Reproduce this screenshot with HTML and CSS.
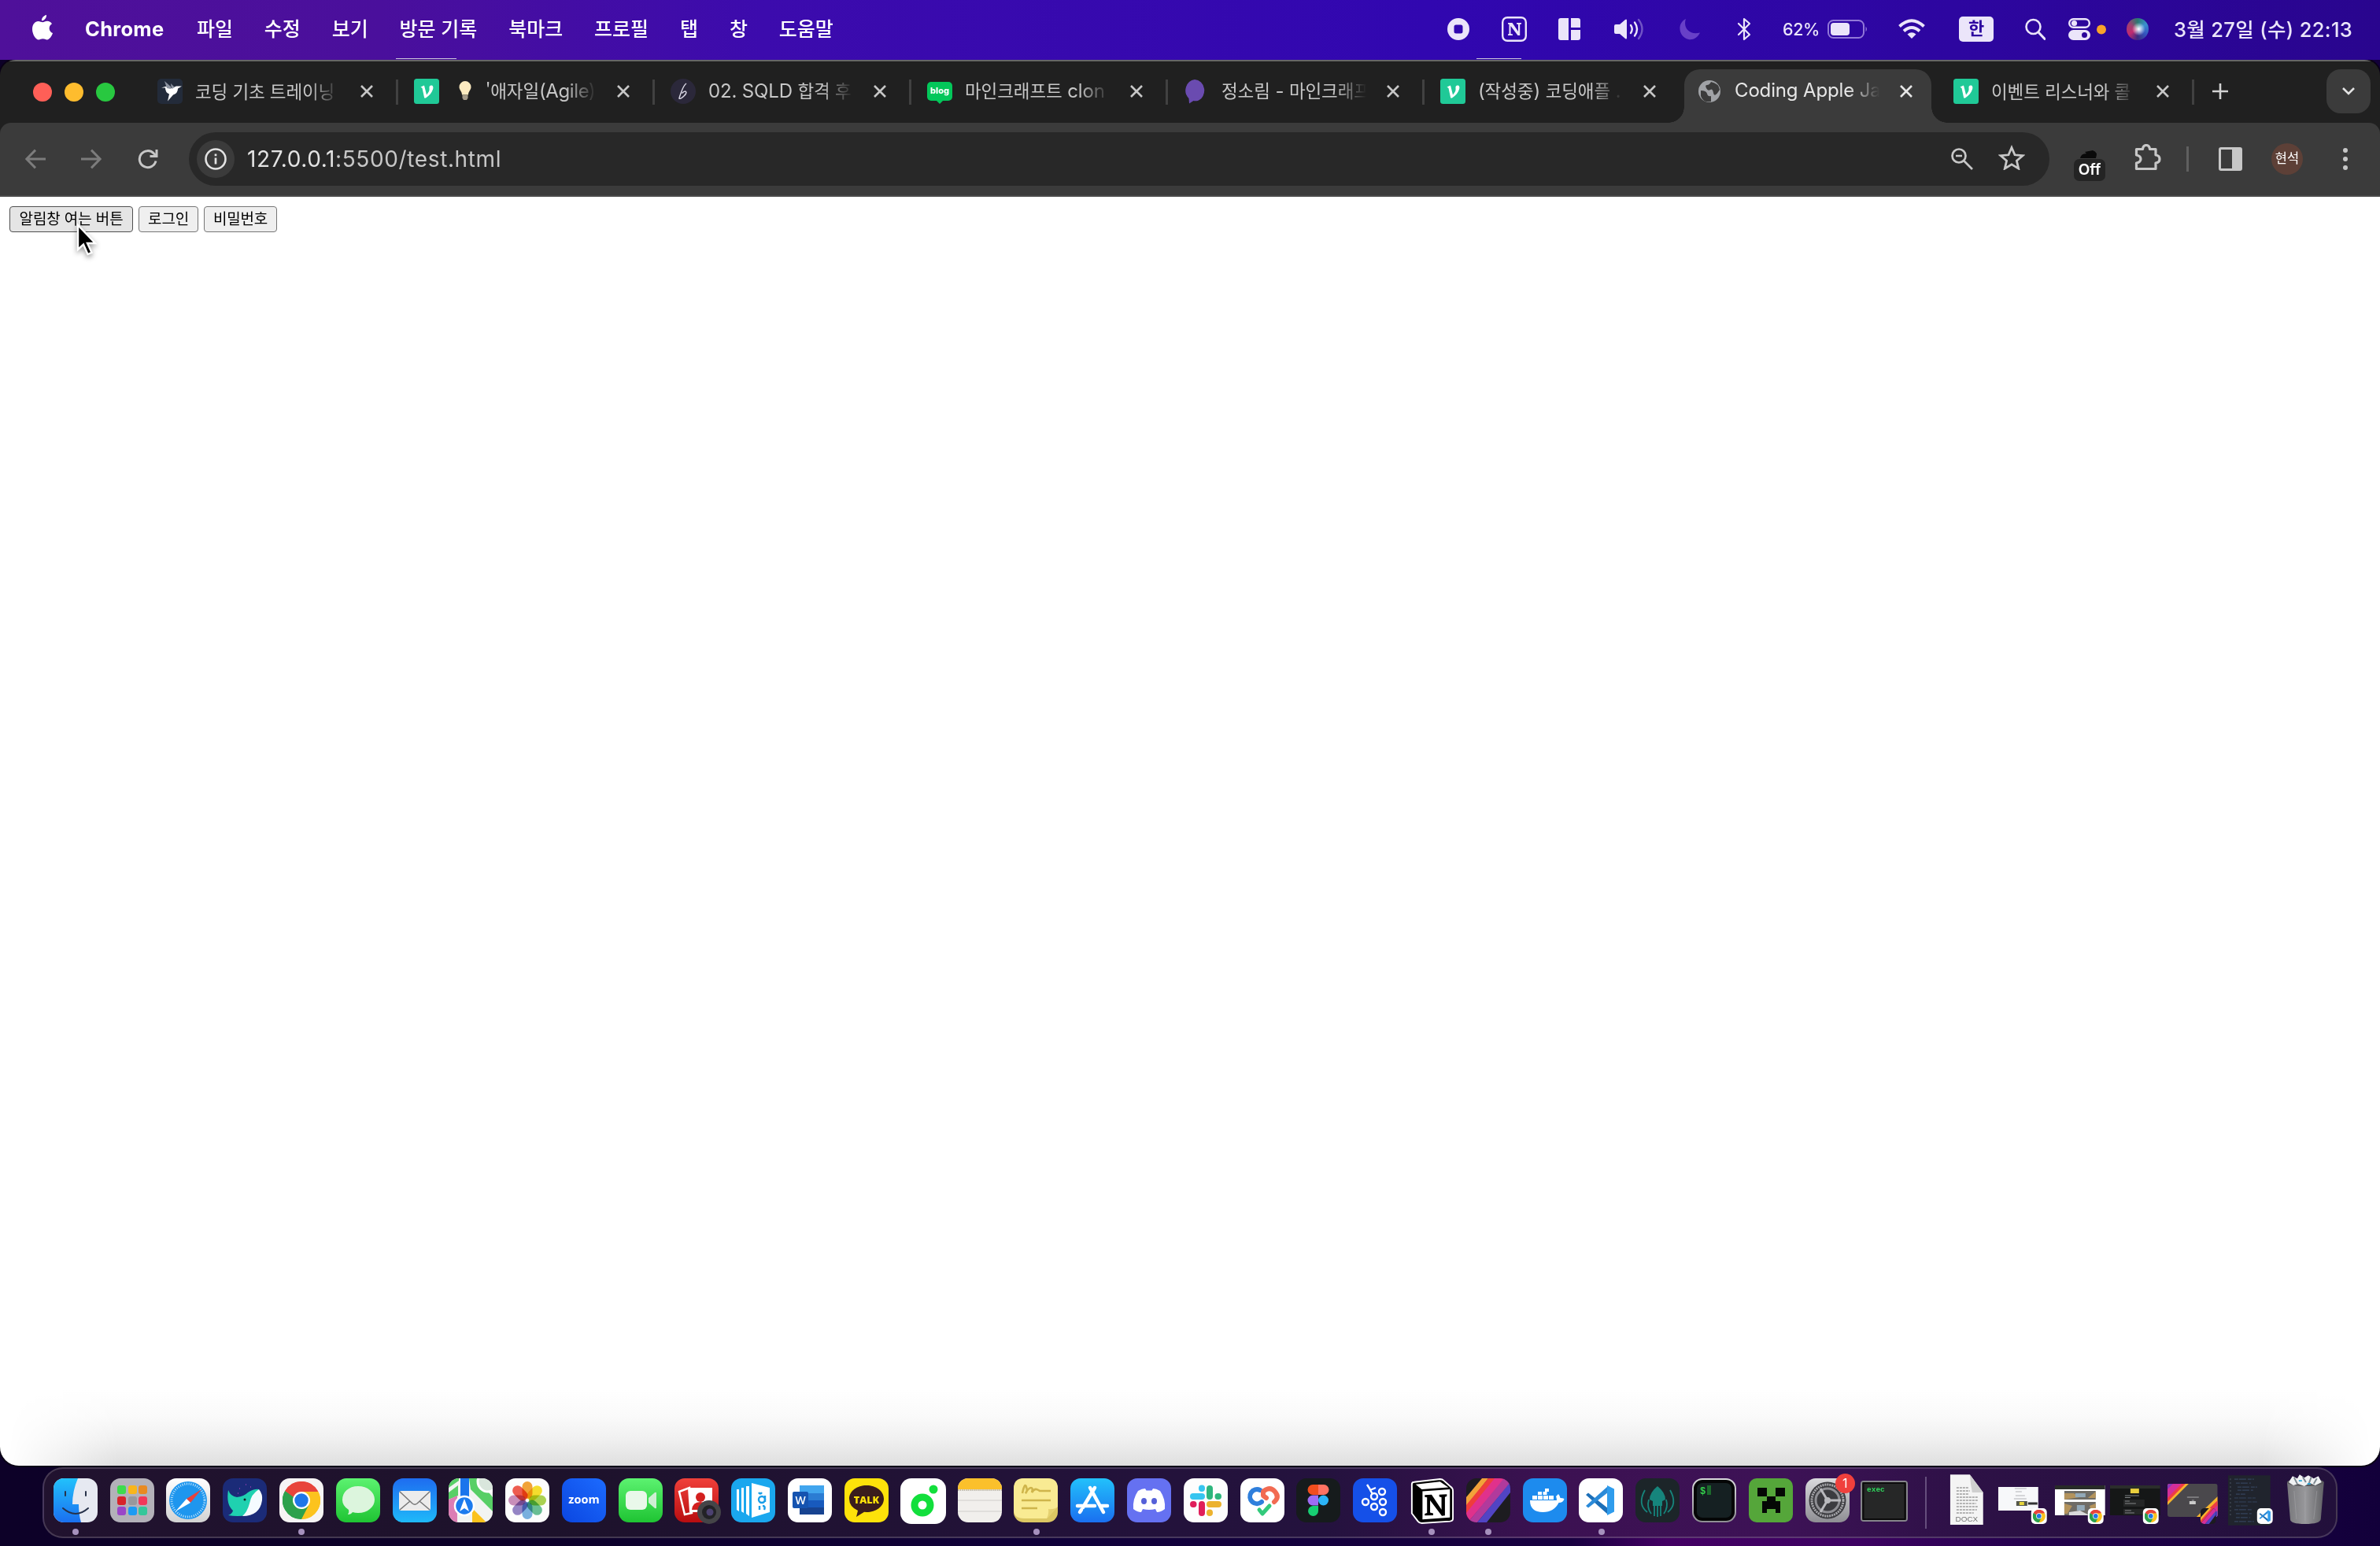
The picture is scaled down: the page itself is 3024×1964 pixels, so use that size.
FILE: index.html
```html
<!DOCTYPE html>
<html lang="ko">
<head>
    <meta charset="UTF-8">
    <meta name="viewport" content="width=device-width, initial-scale=1.0">
    <title>Coding Apple JavaScript</title>
    <link rel="stylesheet" href="styles.css">
</head>
<body>

<!-- 공용 그라디언트와 심볼 -->
<svg class="defs" width="0" height="0">
    <defs>
        <linearGradient id="gBlue" x1="0" y1="0" x2="0" y2="1"><stop offset="0" stop-color="#22c1fb"/><stop offset="1" stop-color="#1a6ff0"/></linearGradient>
        <linearGradient id="gGreen" x1="0" y1="0" x2="0" y2="1"><stop offset="0" stop-color="#5cf270"/><stop offset="1" stop-color="#1fc433"/></linearGradient>
        <linearGradient id="gMail" x1="0" y1="0" x2="0" y2="1"><stop offset="0" stop-color="#1e6cf0"/><stop offset="1" stop-color="#1fb9f9"/></linearGradient>
        <linearGradient id="gZoom" x1="0" y1="1" x2="1" y2="0"><stop offset="0" stop-color="#0b46e0"/><stop offset="1" stop-color="#1c6bff"/></linearGradient>
        <linearGradient id="gGray" x1="0" y1="0" x2="0" y2="1"><stop offset="0" stop-color="#fff"/><stop offset="1" stop-color="#d2d2d2"/></linearGradient>
        <linearGradient id="gRed" x1="0" y1="0" x2="0" y2="1"><stop offset="0" stop-color="#f0403a"/><stop offset="1" stop-color="#b80d10"/></linearGradient>
        <linearGradient id="gMetal" x1="0" y1="0" x2="0" y2="1"><stop offset="0" stop-color="#d9d9dc"/><stop offset="1" stop-color="#8e8e93"/></linearGradient>
        <linearGradient id="gTrash" x1="0" y1="0" x2="1" y2="0"><stop offset="0" stop-color="#77777b"/><stop offset=".5" stop-color="#98989b"/><stop offset="1" stop-color="#626266"/></linearGradient>
        <clipPath id="app"><rect width="56" height="56" rx="13"/></clipPath>
        <clipPath id="thumb"><rect x="4" y="21" width="64" height="42" rx="3"/></clipPath>
        <clipPath id="mark"><rect x="46" y="52" width="20" height="20" rx="5"/></clipPath>
        <symbol id="chrome" viewBox="0 0 48 48">
            <path d="M24 24 3.2 12A24 24 0 0 1 44.8 12z" fill="#e8453c"/>
            <path d="M24 24 44.8 12A24 24 0 0 1 24 48z" fill="#fcc31e"/>
            <path d="M24 24 24 48A24 24 0 0 1 3.2 12z" fill="#2da14c"/>
            <path d="M24 13h21.3a24 24 0 0 1-21.3 35l9.5-18.5z" fill="#fcc31e"/>
            <path d="M3.2 12 14.5 29.5A11 11 0 0 0 33.5 29.5L24 48A24 24 0 0 1 3.2 12z" fill="#2da14c"/>
            <path d="M3.2 12A24 24 0 0 1 45.3 13H24a11 11 0 0 0-10 7z" fill="#e8453c"/>
            <circle cx="24" cy="24" r="11" fill="#fff"/><circle cx="24" cy="24" r="8.7" fill="#1f76e8"/>
        </symbol>
        <symbol id="vscode" viewBox="0 0 40 40">
            <path d="M2 13 5 10.500 30 30v8z" fill="#1c6fb8"/><path d="M2 27 5 29.500 30 10V2z" fill="#2a8ad8"/><path d="M29 1l9 4.500v29L29 39z" fill="#2f9cec"/>
        </symbol>
        <symbol id="velog" viewBox="0 0 32 32">
            <rect width="32" height="32" rx="3.500" fill="#20c997"/><path d="M8.500 10.500 13 8.500l3 12c3-3.500 4-6 3.500-8.500-.3-2 .5-3.500 2.500-3.500s3 2 2 5c-1.200 4-4.500 8-9 11h-1.800L10.500 12z" fill="#fff"/>
        </symbol>
        <symbol id="close" viewBox="0 0 20 20"><path d="M3 3l14 14M17 3 3 17" stroke="currentColor" stroke-width="2.600"/></symbol>
    </defs>
</svg>

<!-- 메뉴 막대 -->
<header class="menubar">
    <svg class="apple" viewBox="0 0 26 32"><path d="M18 0c.3 3.800-2.700 7.300-6 7.300C11.600 4 14.800.5 18 0zM13.200 9.300c1.600 0 3.200-1.500 5.800-1.500 2.500 0 4.800 1.300 6 3.400-5 3-4.200 9.800 1 11.900-1 3.200-4 8.400-7.200 8.400-2 0-2.900-1.200-5.300-1.200-2.500 0-3.500 1.200-5.400 1.200C4.500 31.500 0 24.500 0 18c0-6.300 3.800-10 7.500-10 2.500 0 4.300 1.300 5.700 1.300z" fill="#fff"/></svg>
    <nav class="menu">
        <b class="app-name">Chrome</b>
        <span>파일</span>
        <span>수정</span>
        <span>보기</span>
        <span>방문 기록</span>
        <span>북마크</span>
        <span>프로필</span>
        <span>탭</span>
        <span>창</span>
        <span>도움말</span>
    </nav>
    <div class="status">
        <svg class="s-rec" viewBox="0 0 28 28"><path fill-rule="evenodd" d="M14 0a14 14 0 1 0 0 28 14 14 0 0 0 0-28zM11 8.500h6a2.500 2.500 0 0 1 2.500 2.500v6a2.500 2.500 0 0 1-2.500 2.500h-6A2.500 2.500 0 0 1 8.500 17v-6A2.500 2.500 0 0 1 11 8.500z"/></svg>
        <svg class="s-notion" viewBox="0 0 32 32"><rect x="1.200" y="1.200" width="29.600" height="29.600" rx="6" fill="none" stroke="#ebe5fa" stroke-width="2.400"/><path d="M8 8h5.500l7.500 11V10l-2-.5V8h6v1.500l-1.800.5v14h-2.700L11.500 12v10l2.500.5V24H8v-1.500l1.500-.5V10L8 9.500z"/></svg>
        <svg class="s-split" viewBox="0 0 28 28"><path d="M3 0h10v28H3a3 3 0 0 1-3-3V3a3 3 0 0 1 3-3zM16 0h9a3 3 0 0 1 3 3v9H16zM16 15h12v10a3 3 0 0 1-3 3h-9z"/></svg>
        <svg class="s-vol" viewBox="0 0 38 28"><path d="M0 10a2 2 0 0 1 2-2h5l7-6q2-1.500 2 1v22q0 2.500-2 1l-7-6H2a2 2 0 0 1-2-2z"/><g fill="none" stroke="#ebe5fa" stroke-width="2.400" stroke-linecap="round"><path d="M21 9q3.500 5 0 10"/><path d="M26 5.500q6 8.500 0 17"/><path d="M31 2q9 12 0 24" opacity=".35"/></g></svg>
        <svg class="s-moon" viewBox="0 0 28 28"><path d="M9 1C5 13 14 22 27 18.500 24 25 18 28 12.500 27 0 24-3 7 9 1z" fill="#6840c8"/></svg>
        <svg class="s-bt" viewBox="0 0 18 30"><path d="M2 8l14 14-7 6V2l7 6L2 22" fill="none" stroke="#ebe5fa" stroke-width="2.200" stroke-linejoin="round" stroke-linecap="round"/></svg>
        <span class="percent">62%</span>
        <svg class="s-bat" viewBox="0 0 52 24"><rect x="1" y="1" width="45" height="22" rx="6.500" fill="none" stroke="#9278d8" stroke-width="2"/><rect x="4" y="4" width="24" height="16" rx="4"/><path d="M48.500 8.500q3 3.500 0 7z" fill="#9278d8"/></svg>
        <svg class="s-wifi" viewBox="0 0 34 26"><g fill="none" stroke="#ebe5fa" stroke-width="4"><path d="M1.500 9.500q15.500-14.500 31 0"/><path d="M7 15.500q10-9 20 0"/></g><path d="M11.500 19.500q5.500-4.500 11 0L17 25z"/></svg>
        <span class="ime">한</span>
        <svg class="s-find" viewBox="0 0 26 28"><circle cx="10.500" cy="11" r="9" fill="none" stroke="#ebe5fa" stroke-width="2.600"/><path d="M17 18l8 8.500" stroke="#ebe5fa" stroke-width="3" stroke-linecap="round"/></svg>
        <svg class="s-ctl" viewBox="0 0 48 28"><rect x="1.200" y="1.200" width="25.600" height="10.600" rx="5.300" fill="none" stroke="#ebe5fa" stroke-width="2.400"/><circle cx="7.500" cy="6.500" r="3.600"/><path fill-rule="evenodd" d="M6.500 15h15a6.500 6.500 0 0 1 0 13h-15a6.500 6.500 0 0 1 0-13zM20.500 18a3.500 3.500 0 1 0 0 7 3.500 3.500 0 0 0 0-7z"/><circle cx="42" cy="14.500" r="6" fill="#f9a32a"/></svg>
        <i class="siri"></i>
        <span class="clock">3월 27일 (수) 22:13</span>
    </div>
    <i class="peek peek-left"></i>
    <i class="peek peek-right"></i>
</header>

<!-- 브라우저 창 -->
<main class="window">
    <div class="tabstrip">
        <div class="lights"><i class="red"></i><i class="yellow"></i><i class="green"></i></div>
        <div class="tab">
            <svg class="favicon" viewBox="0 0 32 32"><rect width="32" height="32" rx="5" fill="#232b3a"/><path d="M5 11.500 10 10q2-1 4 1l4 1 6-2.500h7l-5 3q0 6-6 8l-7 8 2-9q-5-2-5-8z" fill="#fff"/><path d="M9 3l8 7v3l-5-1zM17 6l5 5-4 2z" fill="#8d93a0"/></svg>
            <span class="title"><span class="ko">코딩 기초 트레이닝</span></span>
            <svg class="close"><use href="#close"/></svg>
        </div>
        <div class="tab">
            <svg class="favicon"><use href="#velog"/></svg>
            <span class="title"><svg class="bulb" viewBox="0 0 16 24"><path d="M8 0a7.500 7.500 0 0 1 7.500 7.500c0 4-3.500 5.500-3.500 10H4C4 13 .5 11.500.5 7.500A7.500 7.500 0 0 1 8 0z" fill="#fdebc0"/><path d="M4.500 18h7v3.500L10 24H6l-1.500-2.500z" fill="#a49a88"/></svg><span class="ko">'애자일</span><span class="narrow">(Agile)</span></span>
            <svg class="close"><use href="#close"/></svg>
        </div>
        <div class="tab">
            <svg class="favicon" viewBox="0 0 32 32"><circle cx="16" cy="16" r="16" fill="#2b283a"/><path d="M20 6q-3 2-6 10t-3 9q2 1 6-3t2.500-5.500-5 2" fill="none" stroke="#d9d7e4" stroke-width="1.500"/></svg>
            <span class="title">02. SQLD <span class="ko">합격 후</span></span>
            <svg class="close"><use href="#close"/></svg>
        </div>
        <div class="tab">
            <span class="favicon blog">blog</span>
            <span class="title"><span class="ko">마인크래프트</span> clon</span>
            <svg class="close"><use href="#close"/></svg>
        </div>
        <div class="tab">
            <svg class="favicon" viewBox="0 0 32 32"><path d="M14 1a13 14 0 0 1 4 27q-4 .5-5.500 0L7 31.500 6.500 25A13.500 14 0 0 1 14 1z" fill="#6a4bb0"/></svg>
            <span class="title"><span class="ko">정소림</span> - <span class="ko">마인크래프</span></span>
            <svg class="close"><use href="#close"/></svg>
        </div>
        <div class="tab last">
            <svg class="favicon"><use href="#velog"/></svg>
            <span class="title">(<span class="ko">작성중</span>) <span class="ko">코딩애플</span> .</span>
            <svg class="close"><use href="#close"/></svg>
        </div>
        <div class="tab active">
            <svg class="favicon" viewBox="0 0 32 32"><circle cx="16" cy="16" r="14" fill="#a0a2a6"/><path d="M5 15q7 0 8 4t5 3v7q-10 2-13-7zM18 4q-2 4-5 4t-1 4 5 2 4 4 6-1l2-3q-1-8-11-10z" fill="#3b3b3b"/></svg>
            <span class="title">Coding Apple Ja</span>
            <svg class="close"><use href="#close"/></svg>
        </div>
        <div class="tab">
            <svg class="favicon"><use href="#velog"/></svg>
            <span class="title"><span class="ko">이벤트 리스너와 콜</span></span>
            <svg class="close"><use href="#close"/></svg>
        </div>
        <svg class="plus" viewBox="0 0 22 22"><path d="M11 1v20M1 11h20" stroke="#d3d3d3" stroke-width="2.600"/></svg>
        <div class="tab-search"><svg viewBox="0 0 16 10"><path d="M1 1l7 7 7-7" fill="none" stroke="#e3e3e3" stroke-width="2.600"/></svg></div>
    </div>

    <div class="toolbar">
        <svg class="nav-icon dim" viewBox="0 0 24 24"><path d="M24 12H2M12 1.500 1.700 12 12 22.500" fill="none" stroke="currentColor" stroke-width="2.700"/></svg>
        <svg class="nav-icon dim second" viewBox="0 0 24 24"><path d="M0 12h22M12 1.500 22.300 12 12 22.500" fill="none" stroke="currentColor" stroke-width="2.700"/></svg>
        <svg class="nav-icon" viewBox="0 0 26 26"><path d="M23 15.500A10.500 10.500 0 1 1 20.500 6L24 9.500" fill="none" stroke="currentColor" stroke-width="3"/><path d="M25.500 1v10h-10V8h7V1z" fill="currentColor"/></svg>
        <div class="omnibox">
            <span class="site-info"><svg viewBox="0 0 28 28"><circle cx="14" cy="14" r="12.500" fill="none" stroke="#e3e3e3" stroke-width="2.600"/><path d="M14 12.500v8M14 7.500v2.800" stroke="#e3e3e3" stroke-width="2.700"/></svg></span>
            <span class="url">127.0.0.1<em>:5500/test.html</em></span>
            <svg class="mag" viewBox="0 0 28 28"><circle cx="10" cy="10" r="8.500" fill="none" stroke="#c7c7c7" stroke-width="2.700"/><path d="M16.500 16.500 27 27M6 10h8" stroke="#c7c7c7" stroke-width="2.700"/></svg>
            <svg class="star" viewBox="0 0 34 32"><path d="M17 3.500l4 9.300 10 .9-7.600 6.600 2.300 9.800L17 24.900l-8.700 5.200 2.300-9.800L3 13.700l10-.9z" fill="none" stroke="#c7c7c7" stroke-width="2.800"/></svg>
        </div>
        <div class="ext">
            <svg viewBox="0 0 26 10"><path d="M1 10q1-6 8-6L7 2l10-2q7 2 4 10z" fill="#0a0a0a"/></svg>
            <span>Off</span>
        </div>
        <svg class="puzzle" viewBox="0 0 34 34"><path d="M2.500 31.500V24q5.500-1 5.500-5t-5.500-5V6.500h8q.5-5 4.500-5t4.500 5h7.500v7.500q5 .5 5 5t-5 5v7.500z" fill="none" stroke="#c7c7c7" stroke-width="3.200" stroke-linejoin="round"/></svg>
        <i class="divider"></i>
        <svg class="side" viewBox="0 0 30 30"><path fill-rule="evenodd" d="M3 0h24a3 3 0 0 1 3 3v24a3 3 0 0 1-3 3H3a3 3 0 0 1-3-3V3a3 3 0 0 1 3-3zM3 3v24h14V3z" fill="#c7c7c7"/></svg>
        <span class="avatar">현석</span>
        <svg class="dots" viewBox="0 0 6 28"><circle cx="3" cy="3" r="3"/><circle cx="3" cy="14" r="3"/><circle cx="3" cy="25" r="3"/></svg>
    </div>

    <section class="page">
        <div class="buttons">
            <button class="btn hover">알림창 여는 버튼</button>
            <button class="btn">로그인</button>
            <button class="btn">비밀번호</button>
        </div>
        <svg class="cursor" viewBox="0 0 28 42"><path d="M3 2v31l7-6.500 5.500 12.500 5-2.200L15 25h10z" fill="#000" stroke="#fff" stroke-width="2.400"/></svg>
        <div class="shade"></div>
    </section>
</main>

<!-- 독 -->
<footer class="dock">
    <div class="cell on"><svg class="icon" viewBox="0 0 56 56"><g clip-path="url(#app)"><path d="M0 0h56v56H0z" fill="#e6e9f1"/><path d="M0 0h31Q24 16 24 33h8q0 13 3 23H0z" fill="url(#gBlue)"/></g><path d="M15 17v5M41 17v5M12 38q16 14 32 0" fill="none" stroke="#27324a" stroke-width="2" stroke-linecap="round"/></svg></div>
    <div class="cell"><svg class="icon" viewBox="0 0 56 56"><rect width="56" height="56" rx="13" fill="#b3b1b9"/><g><rect x="9" y="9" width="11" height="11" rx="3" fill="#3ddc4c"/><rect x="23" y="9" width="11" height="11" rx="3" fill="#f9b51b"/><rect x="36" y="9" width="11" height="11" rx="3" fill="#e88a22"/><rect x="9" y="23" width="11" height="11" rx="3" fill="#d8232a"/><rect x="23" y="23" width="11" height="11" rx="3" fill="#98989c"/><rect x="36" y="23" width="11" height="11" rx="3" fill="#f2385a"/><rect x="9" y="36" width="11" height="11" rx="3" fill="#9a45c8"/><rect x="23" y="36" width="11" height="11" rx="3" fill="#1d9bf3"/><rect x="36" y="36" width="11" height="11" rx="3" fill="#34c79a"/></g></svg></div>
    <div class="cell"><svg class="icon" viewBox="0 0 56 56"><rect width="56" height="56" rx="13" fill="url(#gGray)"/><circle cx="28" cy="28" r="24" fill="#1e96ee"/><circle cx="28" cy="28" r="21" fill="none" stroke="#bfe4fb" stroke-width="3" stroke-dasharray="1 1.750"/><path d="M45 14 31 31l-5-5z" fill="#e8413c"/><path d="M12 42l14-16 5 5z" fill="#fff"/></svg></div>
    <div class="cell"><svg class="icon" viewBox="0 0 56 56"><rect width="56" height="56" rx="13" fill="#1b2b78"/><path d="M7 15q3 8 11 9 9-1 14-6 8-5 14-4l-6 14-10 19q-11 2-23 0 5-2 6-6Q4 33 7 15z" fill="#1fd1b0"/><path d="M46 14q5 6 4 14-3 20-25 20 6-5 9-16 2-12 12-18z" fill="#f5fbff"/><circle cx="28" cy="27" r="1.500" fill="#122"/><path d="M21 13h1M29 8h1M35 11h1M19 19h1" stroke="#d44ad0" stroke-width="1.200"/></svg></div>
    <div class="cell on"><svg class="icon" viewBox="0 0 56 56"><rect width="56" height="56" rx="13" fill="#f6f4f4"/><use href="#chrome" x="4" y="4" width="48" height="48"/></svg></div>
    <div class="cell"><svg class="icon" viewBox="0 0 56 56"><rect width="56" height="56" rx="13" fill="url(#gGreen)"/><path d="M28 10c12 0 21 7.500 21 17S40 44 28 44q-4 0-7-1-2 3-6 3 2-3 1-6-8-5-8-12.500C8 17.500 16 10 28 10z" fill="#dcf5dd"/></svg></div>
    <div class="cell"><svg class="icon" viewBox="0 0 56 56"><rect width="56" height="56" rx="13" fill="url(#gMail)"/><rect x="8" y="16" width="40" height="25" rx="3" fill="#ececec"/><path d="M9 17l16 15q3 2.500 6 0l16-15M9 40l13-11M47 40 34 29" fill="none" stroke="#777" stroke-width="1.500"/></svg></div>
    <div class="cell"><svg class="icon" viewBox="0 0 56 56"><g clip-path="url(#app)"><path d="M0 0h56v56H0z" fill="#f2f4f2"/><path d="M26 0h10l20 24v18L28 14zM0 18l12-9v13L0 27zM0 0h13v3L0 12z" fill="#58cf66"/><path d="M0 27l11-5v34H0z" fill="#dc7db4"/><path d="M15 0h11v30H15z" fill="#1b75ec"/><path d="M30 38l18 18H30z" fill="#fbc21c"/><circle cx="50" cy="4" r="13" fill="#d9e6dc" stroke="#fff" stroke-width="3"/></g><circle cx="20" cy="35" r="12" fill="#1c7bee" stroke="#fff" stroke-width="2.500"/><path d="M20 26l6 16-6-4-6 4z" fill="#fff"/></svg></div>
    <div class="cell"><svg class="icon" viewBox="0 0 56 56"><rect width="56" height="56" rx="13" fill="#fdfdfd"/><g class="petals"><rect x="21.500" y="4" width="13" height="22" rx="6.500" fill="#f29a22"/><rect x="21.500" y="4" width="13" height="22" rx="6.500" fill="#f5dc16" transform="rotate(45 28 28)"/><rect x="21.500" y="4" width="13" height="22" rx="6.500" fill="#a3cf3f" transform="rotate(90 28 28)"/><rect x="21.500" y="4" width="13" height="22" rx="6.500" fill="#5ab98a" transform="rotate(135 28 28)"/><rect x="21.500" y="4" width="13" height="22" rx="6.500" fill="#6aa9dd" transform="rotate(180 28 28)"/><rect x="21.500" y="4" width="13" height="22" rx="6.500" fill="#8a78c0" transform="rotate(225 28 28)"/><rect x="21.500" y="4" width="13" height="22" rx="6.500" fill="#c583b4" transform="rotate(270 28 28)"/><rect x="21.500" y="4" width="13" height="22" rx="6.500" fill="#ee4b3c" transform="rotate(315 28 28)"/></g></svg></div>
    <div class="cell"><svg class="icon" viewBox="0 0 56 56"><rect width="56" height="56" rx="13" fill="url(#gZoom)"/><text x="28" y="32" class="t-zoom">zoom</text></svg></div>
    <div class="cell"><svg class="icon" viewBox="0 0 56 56"><rect width="56" height="56" rx="13" fill="url(#gGreen)"/><rect x="9" y="16" width="27" height="24" rx="6" fill="#e9f8ea"/><path d="M38 25l8-7q2-1 2 1v18q0 2-2 1l-8-7z" fill="#cfeed3"/></svg></div>
    <div class="cell"><svg class="icon wide" viewBox="0 0 60 58"><rect x="1" width="56" height="56" rx="13" fill="url(#gRed)"/><path d="M7 17l13-5 3 32-9 2z" fill="none" stroke="#fff" stroke-width="2.500"/><path d="M18 12h31v31H20z" fill="#fff"/><circle cx="34" cy="24" r="6" fill="#d3201f"/><path d="M23 40q1-10 11-10t11 10z" fill="#d3201f"/><circle cx="45" cy="43" r="15" fill="#454548"/><circle cx="45" cy="43" r="9" fill="#222226"/><circle cx="46" cy="43" r="4.500" fill="#4c4170"/></svg></div>
    <div class="cell"><svg class="icon" viewBox="0 0 56 56"><rect width="56" height="56" rx="13" fill="#1aa7ee"/><path d="M7 14h3v28l-3-2zM13 12h3v32l-3-2zM19 10h4v38l-4-3zM26 6l23 6v31L26 50z" fill="#fff"/><g fill="none" stroke="#1a9ee8" stroke-width="2.400"><circle cx="39" cy="27" r="4"/><path d="M35 18q2 3 4 0M43 22v8M36 35v5M40 35q4 0 2 5"/></g></svg></div>
    <div class="cell"><svg class="icon" viewBox="0 0 56 56"><rect width="56" height="56" rx="13" fill="#fff"/><path d="M15 9h31v10H15z" fill="#41a5ee"/><path d="M15 19h31v9H15z" fill="#2b7cd3"/><path d="M15 28h31v9H15z" fill="#185abd"/><path d="M15 37h31v9H15z" fill="#174390"/><rect x="6" y="17" width="20" height="21" rx="2" fill="#1553b0"/><text x="16" y="33" class="t-word">W</text></svg></div>
    <div class="cell"><svg class="icon" viewBox="0 0 56 56"><rect width="56" height="56" rx="13" fill="#fde20a"/><path d="M28 9c12 0 22 7 22 17s-10 17-22 17l-3-.3L15 49l2-8Q6 36 6 26C6 16 16 9 28 9z" fill="#3a1d1d"/><text x="28" y="31.500" class="t-talk">TALK</text></svg></div>
    <div class="cell"><svg class="icon wide" viewBox="0 0 58 58"><rect width="58" height="58" rx="14" fill="#fff"/><circle cx="28" cy="34" r="10" fill="none" stroke="#12df3c" stroke-width="9"/><circle cx="42" cy="14" r="5.500" fill="#12df3c"/></svg></div>
    <div class="cell"><svg class="icon" viewBox="0 0 56 56"><g clip-path="url(#app)"><path d="M0 0h56v56H0z" fill="#f1efec"/><path d="M0 0h56v14H0z" fill="#fbc02b"/><path d="M0 15h56" stroke="#b3a88c" stroke-width="1.500" stroke-dasharray="1.500 1"/><path d="M0 28h56M0 42h56" stroke="#cfcdca" stroke-width="1"/></g></svg></div>
    <div class="cell on"><svg class="icon" viewBox="0 0 56 56"><rect width="56" height="56" rx="13" fill="#dcc763"/><path d="M13 0h30q13 0 13 13v23L42 51H13Q0 51 0 40V13Q0 0 13 0z" fill="#f9eb93"/><path d="M56 36q-5 4-12 3 1 6-2 12z" fill="#e5d170"/><path d="M11 19q3-14 5-8t-1 8q4-7 7-7t1 6q3-5 6-4t4 2h14M10 28h37M10 38h20" fill="none" stroke="#cfb54b" stroke-width="2.600"/></svg></div>
    <div class="cell"><svg class="icon" viewBox="0 0 56 56"><rect width="56" height="56" rx="13" fill="url(#gBlue)"/><path d="M31 12 16 37M25 12l17 31M9 35h22M38 35h9M14 40l-2 3" fill="none" stroke="#fff" stroke-width="4.500" stroke-linecap="round"/></svg></div>
    <div class="cell"><svg class="icon" viewBox="0 0 56 56"><rect width="56" height="56" rx="13" fill="#6571f1"/><path d="M14 16q5-3 9-3l1.500 2.500h7L33 13q4 0 9 3 7 10 6 23-5 4-10 4l-2-4q-8 2-16 0l-2 4q-5 0-10-4-1-13 6-23z" fill="#fff"/><ellipse cx="21.500" cy="29" rx="3.500" ry="4" fill="#5560d8"/><ellipse cx="34.500" cy="29" rx="3.500" ry="4" fill="#5560d8"/></svg></div>
    <div class="cell"><svg class="icon" viewBox="0 0 56 56"><rect width="56" height="56" rx="13" fill="#fdfdfd"/><g fill="none" stroke-width="8" stroke-linecap="round"><path d="M23 13v-.5M12 23h11" stroke="#36c5f0"/><path d="M33 13v10M43.500 23h.5" stroke="#2eb67d"/><path d="M33 33h11M33 43.500v.5" stroke="#ecb22e"/><path d="M23 33v11M12 33h.5" stroke="#e01e5a"/></g></svg></div>
    <div class="cell"><svg class="icon" viewBox="0 0 56 56"><rect width="56" height="56" rx="13" fill="#fff"/><g fill="none" stroke-width="6" stroke-linecap="round" stroke-linejoin="round"><path d="M25 15a9 9 0 1 0 2 15" stroke="#2f7fdc"/><path d="M30 16q8-6 14 1t-1 13M29 17v5l4 3" stroke="#f26b52"/><path d="M24 40l4 5 9-10" stroke="#33ca7c" stroke-width="5"/></g></svg></div>
    <div class="cell"><svg class="icon" viewBox="0 0 56 56"><rect width="56" height="56" rx="13" fill="#161b1c"/><path d="M28 8h-7a6.500 6.500 0 0 0 0 13h7z" fill="#f24e1e"/><path d="M28 8h7a6.500 6.500 0 0 1 0 13h-7z" fill="#ff7262"/><path d="M28 21.500h-7a6.500 6.500 0 0 0 0 13h7z" fill="#9f6cf5"/><circle cx="34.500" cy="28" r="6.500" fill="#2bb4f8"/><path d="M28 35h-7a6.500 6.500 0 1 0 7 6.500z" fill="#17cf72"/></svg></div>
    <div class="cell"><svg class="icon" viewBox="0 0 56 56"><rect width="56" height="56" rx="13" fill="#1550e8"/><g fill="none" stroke="#fff" stroke-width="2.400"><circle cx="37" cy="17" r="4"/><circle cx="27" cy="23" r="4"/><circle cx="16" cy="30" r="4"/><circle cx="38" cy="30" r="4"/><circle cx="27" cy="36" r="4"/><circle cx="38" cy="43" r="4"/><path d="M18 8l5 8M29 12l-7 3M22 15l3 5"/></g></svg></div>
    <div class="cell on"><svg class="icon wide" viewBox="0 0 58 60"><path d="M3 8q0-3 3-3L40 1q3 0 5 2l9 8q3 2 3 6v36q0 3-4 3.500L16 59q-3 0-5-2.500L3 46z" fill="#000" stroke="#fff" stroke-width="2"/><path d="M17 17l36-2.500v37L17 54z" fill="#fff"/><path d="M8 8l32-3.500 11 7.500-35 2.500z" fill="#fff"/><path d="M20 22l9-.5L42 41V25l-3-1v-2.500l10-.5v2.500l-2.500 1V49l-4 .5L27 29v16l4 1v2.500l-11 .5v-2.500l3-1V25l-3-.5z" fill="#000"/></svg></div>
    <div class="cell on"><svg class="icon" viewBox="0 0 56 56"><g clip-path="url(#app)"><path d="M0 0h56v56H0z" fill="#1d1c20"/><path d="M0 24 20 0h8L0 36z" fill="#f2a33a"/><path d="M0 34 28 0h9L0 46z" fill="#ef3d3b"/><path d="M0 44 36 0h14L2 56H0z" fill="#e0318c"/><path d="M2 56 48 0h8v6L14 56z" fill="#b13a9c"/><path d="M14 56 56 5v13L26 56z" fill="#5144c4"/></g></svg></div>
    <div class="cell"><svg class="icon" viewBox="0 0 56 56"><rect width="56" height="56" rx="13" fill="#1d8bee"/><path d="M9 28h34q0-3-1-5l3-3q2 2 2.500 5 3 0 5 1-1 5-7 5-6 12-20 12Q9 43 9 28z" fill="#fff"/><path d="M12 22h6v5h-6zM19 22h6v5h-6zM26 22h6v5h-6zM33 22h6v5h-6zM19 17h5v4h-5zM25.500 17h5v4h-5zM28 13h5v4h-5z" fill="#fff"/></svg></div>
    <div class="cell on"><svg class="icon" viewBox="0 0 56 56"><rect width="56" height="56" rx="13" fill="#fff"/><use href="#vscode" x="7" y="8" width="40" height="40"/></svg></div>
    <div class="cell"><svg class="icon" viewBox="0 0 56 56"><rect width="56" height="56" rx="13" fill="#1c2529"/><path d="M28 10q10 8 10 17l-4 2v6H22v-6l-4-2q0-9 10-17z" fill="#16857c"/><path d="M12 15q-10 18 3 28M44 15q10 18-3 28M17 27q-3 10 3 18M39 27q3 10-3 18M24 34v14M28 34v15M32 34v14" fill="none" stroke="#16857c" stroke-width="1.800"/></svg></div>
    <div class="cell"><svg class="icon" viewBox="0 0 56 56"><rect width="56" height="56" rx="13" fill="url(#gMetal)"/><rect x="2" y="2" width="52" height="52" rx="11" fill="#050606"/><rect x="6" y="6" width="44" height="44" rx="7" fill="#152022"/><text x="10" y="20" class="t-term">$</text><path d="M19 9h5v12h-5z" fill="#1c6b2c"/></svg></div>
    <div class="cell"><svg class="icon" viewBox="0 0 56 56"><rect width="56" height="56" rx="10" fill="#55a63a"/><path d="M11 12h12v11H11zM34 12h12v11H34zM23 23h11v6h6v15h-6v-5H23v5h-6V29h6z" fill="#050805"/></svg></div>
    <div class="cell"><svg class="icon" viewBox="0 0 56 56"><rect width="56" height="56" rx="13" fill="url(#gMetal)"/><circle cx="28" cy="28" r="23.500" fill="#3c3c40"/><circle cx="28" cy="28" r="20" fill="none" stroke="#a7a7ab" stroke-width="3" stroke-dasharray="2 1"/><circle cx="28" cy="28" r="15" fill="none" stroke="#8f8f94" stroke-width="3"/><path d="M28 28 19 13M28 28l-9 15M28 28h17" stroke="#b9b9bd" stroke-width="3"/><circle cx="28" cy="28" r="4" fill="#b9b9bd"/></svg><span class="badge">1</span></div>
    <div class="cell"><svg class="icon wide" viewBox="0 0 60 52"><rect x="1" y="1" width="58" height="50" rx="3" fill="#262727" stroke="#85858b" stroke-width="2"/><path d="M3.500 3h53v46h-53z" fill="none" stroke="#0b0b0b" stroke-width="2"/><text x="8" y="14" class="t-exec">exec</text></svg></div>
    <i class="dock-sep"></i>
    <svg class="mini" viewBox="0 0 72 90"><path d="M15 9h25l17 23v41H15z" fill="#f4f4f4"/><path d="M40 9l17 23H43q-2-10-3-23z" fill="#cfcfcf"/><path d="M23 26h15M23 30h17M23 34h15M23 38h27M23 42h27M23 46h25M23 50h27M23 54h26M23 58h22" stroke="#9c9c9c" stroke-width="1.500" stroke-dasharray="3 1"/><text x="36" y="69" class="t-docx">DOCX</text></svg>
    <svg class="mini" viewBox="0 0 72 90"><path d="M4 25h51v30H4z" fill="#f7f8fa"/><path d="M25 27h15M26 31h8M26 36h12M24 40h16" stroke="#c9c9cd" stroke-width="1.500"/><path d="M27 43h14v6H27z" fill="#55584a"/><path d="M31 44h6v4h-6z" fill="#e7d53c"/><path d="M42 46h12" stroke="#333" stroke-width="3"/><rect x="46" y="52" width="20" height="20" rx="5" fill="#fff"/><use href="#chrome" x="48" y="54" width="16" height="16"/></svg>
    <svg class="mini" viewBox="0 0 72 90"><path d="M4 23h64v38H4z" fill="#fff"/><path d="M4 23h64v5H4z" fill="#282b28"/><path d="M16 30h40v11H16zM16 44h40v17H16z" fill="#6f6c66"/><path d="M16 33h12l8 5-20 3zM56 31l-10 8h10zM16 46l10 3-6 10h-4zM56 46l-8 3 4 8h4z" fill="#b4935c"/><path d="M30 33h13v5H30zM32 48h10v7H32z" fill="#93a9b8"/><path d="M22 57l14-2 12 6H22z" fill="#d9dadb"/><rect x="46" y="52" width="20" height="20" rx="5" fill="#fff"/><use href="#chrome" x="48" y="54" width="16" height="16"/></svg>
    <svg class="mini" viewBox="0 0 72 90"><path d="M3 23h64v38H3z" fill="#151717"/><path d="M3 23h64v4H3z" fill="#2b2e2b"/><path d="M29 27h11v6H29z" fill="#e9cf3d"/><path d="M20 41h27v9H20zM20 53h27v7H20z" fill="#252727"/><path d="M22 36h18M22 38.500h7M22 43h6M22 46h14M22 55h8M22 58h12" stroke="#85888a" stroke-width="1"/><rect x="45" y="52" width="20" height="20" rx="5" fill="#fff"/><use href="#chrome" x="47" y="54" width="16" height="16"/></svg>
    <svg class="mini" viewBox="0 0 72 90"><g clip-path="url(#thumb)"><path d="M4 21h64v42H4z" fill="#4a484c"/><path d="M4 21h27L4 48z" fill="#f6b42c"/><path d="M4 21h23L4 44z" fill="#ee3c46"/><path d="M4 21h18L4 39z" fill="#d42f9a"/><path d="M4 21h7l-7 7z" fill="#8a38b8"/><path d="M68 37v26H41z" fill="#f6b42c"/><path d="M68 42v21H46z" fill="#ee3c46"/><path d="M68 48v15H52z" fill="#d42f9a"/><path d="M68 55v8h-9z" fill="#4c42c8"/></g><path d="M29 38h15M35 42h3" stroke="#a7a7aa" stroke-width="1"/><rect x="32" y="43" width="8" height="4" fill="#ccc"/><g clip-path="url(#mark)"><path d="M46 52h20v20H46z" fill="#1c1b20"/><path d="M46 64 57 52h4L46 69z" fill="#f6b42c"/><path d="M46 68 60 52h3L46 72z" fill="#ee3c46"/><path d="M46 72 63 52h3v4L52 72z" fill="#d42f9a"/><path d="M52 72 66 55v5L57 72z" fill="#5144c4"/></g></svg>
    <svg class="mini" viewBox="0 0 72 90"><path d="M9 10h54v64H9z" fill="#20242d"/><path d="M17 15h25M19 20h19M21 25h25M21 29h20M19 34h12M17 39h27M17 44h29M19 49h16M17 54h22M19 59h20M19 64h18M17 69h25" stroke="#34435c" stroke-width="1.200" stroke-dasharray="5 1 9 2"/><path d="M12 14v50" stroke="#3d4450" stroke-width="1.500" stroke-dasharray="2 3"/><rect x="46" y="52" width="20" height="20" rx="5" fill="#fff"/><use href="#vscode" x="48" y="54" width="16" height="16"/></svg>
    <svg class="mini" viewBox="0 0 72 90"><path d="M13 19q23-8 47 0l-4 47q-1 6-20 6t-19-6z" fill="url(#gTrash)"/><ellipse cx="36.500" cy="19" rx="23.500" ry="5" fill="#59595d"/><path d="M15 19l5-8 6 3 3-5 6 4 5-3 7 4 6-3 4 8-8 4-7-3-7 4-8-3-6 2z" fill="#f0f2f4"/><path d="M22 13l4 8M33 12l4 7M44 12l-3 8M51 14l-4 7" stroke="#7e8890" stroke-width="2"/><path d="M28 17h4M39 21h4" stroke="#2fa8d8" stroke-width="2"/><path d="M22 30l3 36M36 31v37M51 30l-4 36" stroke="#a8a8ac" stroke-width="1" opacity=".5"/></svg>
</footer>

</body>
</html>
```

FILE: styles.css
```css
* {
    box-sizing: border-box;
}

body, html {
    margin: 0;
    padding: 0;
    width: 3024px;
    height: 1964px;
    overflow: hidden;
}

body {
    font-family: Inter, "Noto Sans CJK KR", sans-serif;
    display: flex;
    flex-direction: column;
    background: linear-gradient(90deg, #0d0128 0%, #0c0128 20%, #10013a 45%, #180140 66%, #430063 70%, #3d0262 78%, #21014a 86%, #12003a 100%);
}

svg {
    flex: none;
    display: block;
}

.defs {
    position: absolute;
}

/* 메뉴 막대 */
.menubar {
    position: relative;
    height: 76px;
    flex: none;
    display: flex;
    align-items: center;
    padding: 0 33px 2px 41px;
    background: linear-gradient(90deg, #4f109a 0%, #4a0f9c 16%, #3c0bad 32%, #3107b0 60%, #2d06a0 82%, #29058e 100%);
    color: #fff;
    font-size: 25px;
    font-weight: 500;
}

.apple {
    width: 26px;
    height: 32px;
    margin-right: 41px;
    margin-top: -4px;
}

.menu {
    display: flex;
    align-items: baseline;
    gap: 39.9px;
    margin-top: -4px;
    white-space: nowrap;
}

.app-name {
    width: 102px;
    font-weight: 700;
    font-size: 25.5px;
    letter-spacing: 0.3px;
}

.status {
    margin-left: auto;
    display: flex;
    align-items: center;
    color: #ebe5fa;
    fill: #ebe5fa;
    white-space: nowrap;
}

.s-rec { width: 28px; height: 28px; margin-right: 41px; }
.s-notion { width: 32px; height: 32px; margin-right: 40px; }
.s-split { width: 28px; height: 28px; margin-right: 43px; }
.s-vol { width: 38px; height: 28px; margin-right: 44px; }
.s-moon { width: 28px; height: 28px; margin-right: 46px; }
.s-bt { width: 18px; height: 30px; margin-right: 40px; }
.s-bat { width: 52px; height: 24px; margin-right: 38px; }
.s-wifi { width: 34px; height: 26px; margin-right: 43px; }
.s-find { width: 26px; height: 28px; margin-right: 29px; }
.s-ctl { width: 48px; height: 28px; margin-right: 26px; }

.percent {
    width: 57px;
    font-size: 21.5px;
    letter-spacing: -0.4px;
}

.ime {
    width: 44px;
    height: 32px;
    margin-right: 40px;
    border-radius: 5px;
    background: #ebe5fa;
    color: #2d06a0;
    font-size: 22px;
    font-weight: 700;
    line-height: 31px;
    text-align: center;
}

.siri {
    width: 28px;
    height: 28px;
    margin-right: 32px;
    border-radius: 50%;
    background: radial-gradient(circle at 55% 50%, #fff 0, rgba(255, 255, 255, 0) 40%), conic-gradient(#2a7a70, #3a8fd0, #3456c0, #3a2a80, #c02a70, #a04070, #2a7a70);
}

.clock {
    width: 229px;
    margin-top: -4px;
    font-size: 25.5px;
    letter-spacing: 0.35px;
}

.peek {
    position: absolute;
    top: 74px;
    height: 1px;
    background: #cfcadb;
}

.peek-left { left: 503px; width: 77px; }
.peek-right { left: 1876px; width: 57px; }

/* 창 */
.window {
    height: 1786px;
    flex: none;
    display: flex;
    flex-direction: column;
    border-radius: 20px 20px 24px 24px;
    overflow: hidden;
    background: #202020;
    box-shadow: 0 0 0 2px #0a0216;
}

.tabstrip {
    height: 80px;
    flex: none;
    display: flex;
    border-top: 2px solid #666;
    padding-left: 42px;
    color: #c7c7c7;
}

.lights {
    display: flex;
    gap: 16px;
    width: 136px;
    padding-top: 27px;
}

.lights i {
    width: 24px;
    height: 24px;
    border-radius: 50%;
}

.red { background: #ff5f57; }
.yellow { background: #febc2e; }
.green { background: #28c840; }

.tab {
    position: relative;
    width: 326px;
    height: 78px;
    flex: none;
    display: flex;
    align-items: center;
    padding: 0 0 2px 22px;
}

/* 탭 사이의 구분선 */
.tab::after {
    content: "";
    position: absolute;
    right: -2px;
    top: 23px;
    width: 3px;
    height: 32px;
    background: #414141;
}

.tab.last::after {
    display: none;
}

.favicon {
    width: 32px;
    height: 32px;
    flex: none;
}

.title {
    display: flex;
    align-items: baseline;
    width: 190px;
    margin-left: 16px;
    margin-top: -2px;
    white-space: pre;
    font-size: 24px;
    line-height: 40px;
    letter-spacing: -0.15px;
    -webkit-mask-image: linear-gradient(90deg, #000 76%, transparent 97%);
    mask-image: linear-gradient(90deg, #000 76%, transparent 97%);
}

.ko {
    font-family: "Noto Sans CJK KR", sans-serif;
    font-size: 22.5px;
    letter-spacing: -0.1px;
}

.narrow {
    letter-spacing: -0.4px;
}

.bulb {
    align-self: center;
    width: 16px;
    height: 24px;
    margin: 0 18px 0 9px;
}

.close {
    width: 20px;
    height: 20px;
    margin-left: 18px;
}

.blog {
    position: relative;
    height: 24px;
    margin-top: -1px;
    border-radius: 5px;
    background: #03c75a;
    color: #fff;
    font-size: 11px;
    font-weight: 800;
    line-height: 23px;
    text-align: center;
}

.blog::after {
    content: "";
    position: absolute;
    left: 12px;
    top: 24px;
    border: 4px solid transparent;
    border-top-color: #03c75a;
}

.tab.active {
    color: #e6e6e6;
}

.tab.active::before {
    content: "";
    position: absolute;
    left: 6px;
    right: 6px;
    top: 10px;
    bottom: 0;
    border-radius: 20px 20px 0 0;
    background: #3b3b3b;
}

.tab.active > * {
    z-index: 1;
}

/* 활성 탭 아래쪽의 둥근 모서리 */
.tab.active::after {
    left: -14px;
    right: -14px;
    top: 58px;
    width: auto;
    height: 20px;
    background:
        radial-gradient(circle at 0 0, transparent 19.5px, #3b3b3b 20px) left / 20px 20px no-repeat,
        radial-gradient(circle at 100% 0, transparent 19.5px, #3b3b3b 20px) right / 20px 20px no-repeat;
}

.plus {
    width: 22px;
    height: 22px;
    margin: 27px 0 0 24px;
}

.tab-search {
    display: flex;
    align-items: center;
    justify-content: center;
    width: 56px;
    height: 56px;
    margin: 10px 12px 0 auto;
    border-radius: 18px;
    background: #3b3b3b;
}

.tab-search svg {
    width: 16px;
    height: 10px;
}

.toolbar {
    height: 94px;
    flex: none;
    display: flex;
    align-items: center;
    padding: 0 41px 0 32px;
    border-bottom: 2px solid #4a4a4a;
    border-radius: 14px 14px 0 0;
    background: #3b3b3b;
}

.nav-icon {
    width: 26px;
    height: 26px;
    margin-right: 45px;
    color: #c7c7c7;
}

.nav-icon.dim {
    color: #7c7c7c;
}

.nav-icon.second {
    margin-right: 46px;
}

.omnibox {
    display: flex;
    align-items: center;
    width: 2364px;
    height: 68px;
    margin-left: -6px;
    padding: 0 31px 0 10px;
    border-radius: 34px;
    background: #282828;
}

.site-info {
    display: flex;
    align-items: center;
    justify-content: center;
    width: 48px;
    height: 48px;
    border-radius: 50%;
    background: #3b3b3b;
}

.site-info svg {
    width: 28px;
    height: 28px;
}

.url {
    margin-left: 16px;
    color: #e3e3e3;
    font-size: 28px;
    letter-spacing: 0.62px;
}

.url em {
    font-style: normal;
    color: #c7c7c7;
}

.mag {
    width: 28px;
    height: 28px;
    margin-left: auto;
    margin-right: 32px;
}

.star {
    width: 34px;
    height: 32px;
    margin-top: -4px;
}

.ext {
    display: flex;
    flex-direction: column;
    align-items: center;
    width: 40px;
    margin: 17px 37px 0 31px;
}

.ext svg {
    width: 26px;
    height: 10px;
}

.ext span {
    width: 40px;
    height: 28px;
    margin-top: 1px;
    border-radius: 7px;
    background: #242424;
    color: #fff;
    font-size: 19px;
    font-weight: 600;
    line-height: 28px;
    text-align: center;
}

.puzzle {
    width: 34px;
    height: 34px;
    margin-top: -4px;
}

.divider {
    width: 3px;
    height: 32px;
    margin: 0 38px 0 32px;
    background: #5f5f5f;
}

.side {
    width: 30px;
    height: 30px;
    margin-right: 37px;
}

.avatar {
    width: 40px;
    height: 40px;
    flex: none;
    border-radius: 50%;
    background: #5d4037;
    color: #fff;
    font-size: 16.5px;
    line-height: 38px;
    text-align: center;
}

.dots {
    width: 6px;
    height: 28px;
    margin-left: auto;
    fill: #c7c7c7;
}

/* 페이지 본문 */
.page {
    position: relative;
    flex: 1;
    display: flex;
    flex-direction: column;
    background: #fff;
}

.buttons {
    display: flex;
    gap: 7px;
    padding: 12px;
}

.btn {
    height: 33px;
    padding: 0 11px 3px;
    border: 1.5px solid #767676;
    border-radius: 4px;
    background: #efefef;
    color: #000;
    font-family: "Noto Sans CJK KR", sans-serif;
    font-size: 19px;
    line-height: 28px;
    letter-spacing: -0.2px;
    white-space: nowrap;
}

.btn.hover {
    padding: 0 11.5px 3px;
    letter-spacing: -0.1px;
    border-color: #4f4f4f;
    background: #e5e5e5;
}

.cursor {
    position: absolute;
    left: 96px;
    top: 34px;
    width: 28px;
    height: 42px;
    filter: drop-shadow(0 3px 3px rgba(0, 0, 0, 0.4));
}

.shade {
    height: 96px;
    margin-top: auto;
    background: linear-gradient(#fff, #fafafa 35%, #f0f0f0 65%, #dfdfdf);
    -webkit-mask-image: linear-gradient(90deg, transparent 10px, #000 150px, #000 2874px, transparent 3014px);
    mask-image: linear-gradient(90deg, transparent 10px, #000 150px, #000 2874px, transparent 3014px);
}

/* 독 */
.dock {
    display: flex;
    width: 2916px;
    height: 90px;
    margin: 2px 0 0 54px;
    padding-left: 4px;
    border: 2px solid rgba(255, 255, 255, 0.17);
    border-radius: 26px;
    background: linear-gradient(90deg, #21122f 0%, #1d122b 22%, #221238 42%, #24123e 56%, #3c1152 66%, #3d1256 76%, #2d1146 84%, #22103b 100%);
}

.cell {
    position: relative;
    width: 71.8px;
    flex: none;
    padding-top: 12px;
}

.icon {
    width: 56px;
    height: 56px;
    margin: 0 auto;
}

.icon.wide {
    width: 60px;
    height: 58px;
    margin-left: 6px;
}

.cell.on::after {
    content: "";
    position: absolute;
    left: 32px;
    top: 76px;
    width: 8px;
    height: 8px;
    border-radius: 50%;
    background: #a691bd;
}

.badge {
    position: absolute;
    left: 46px;
    top: 6px;
    width: 25px;
    height: 25px;
    border-radius: 50%;
    background: #f0403c;
    color: #fff;
    font-size: 16px;
    line-height: 25px;
    text-align: center;
}

.petals rect {
    mix-blend-mode: multiply;
    opacity: 0.9;
}

.dock-sep {
    width: 2px;
    height: 66px;
    margin: 10px 15px 0 17px;
    flex: none;
    background: #664e7d;
}

.mini {
    width: 71.7px;
    height: 90px;
    margin-top: -2px;
}

.t-zoom { fill: #fff; font: 700 14.5px "Open Sans", sans-serif; text-anchor: middle; }
.t-word { fill: #fff; font: 600 14px "Open Sans", sans-serif; text-anchor: middle; }
.t-talk { fill: #fde20a; font: 800 12.5px "Open Sans", sans-serif; text-anchor: middle; }
.t-term { fill: #35d24c; font: 700 12px "Liberation Mono", monospace; }
.t-exec { fill: #2fd65c; font: 700 9.5px "Liberation Mono", monospace; }
.t-docx { fill: #777; font: 10px "Liberation Sans", sans-serif; text-anchor: middle; }
```
